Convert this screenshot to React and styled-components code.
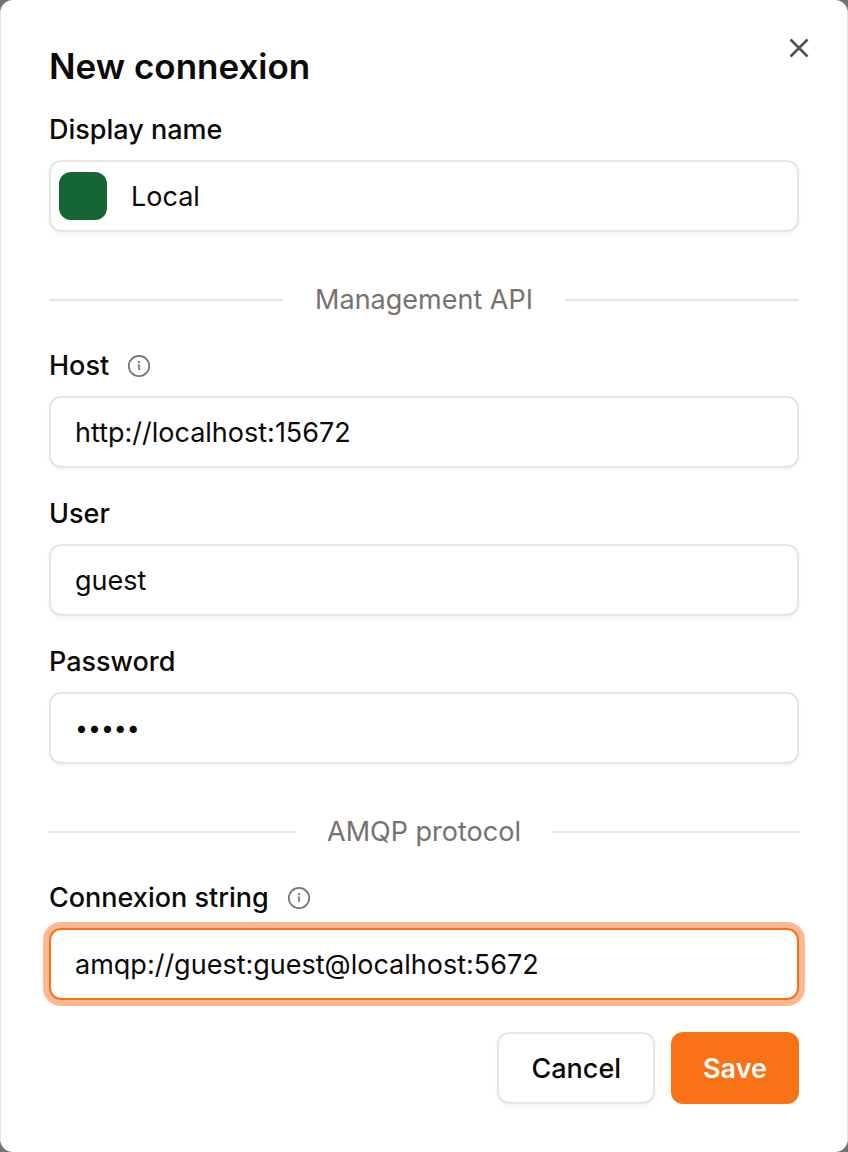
import { useState } from "react";
import styled, { createGlobalStyle } from 'styled-components';

const GlobalStyle = createGlobalStyle`
  * {
    box-sizing: border-box;
  }

  body {
    margin: 0;
    background-color: #78716c;
    color: #0c0a09;
    font-family: Inter, "Liberation Sans", sans-serif;
    font-size: 27px;
  }
`;

const Dialog = styled.form`
  position: relative;
  display: flex;
  flex-direction: column;
  gap: 32px;
  min-height: 100vh;
  padding: 48px;
  background-color: white;
  border: solid #e5e5e5;
  border-width: 0 1px;
  border-radius: 13px;
`;

const Title = styled.h1`
  margin: 0;
  font-size: 35px;
  font-weight: 600;
  line-height: 36px;
`;

const CloseButton = styled.button`
  position: absolute;
  top: 32px;
  right: 32px;
  width: 32px;
  height: 32px;
  padding: 0;
  border: none;
  background: none;
  color: #545352;
  cursor: pointer;

  svg {
    display: block;
  }
`;

const Field = styled.div`
  display: flex;
  flex-direction: column;
  gap: 16px;
`;

const LabelRow = styled.div`
  display: flex;
  align-items: center;
  gap: 18px;
  height: 28px;
  color: #78716c;
`;

const Label = styled.label`
  font-weight: 500;
  line-height: 28px;
  color: #0c0a09;
`;

const Input = styled.input`
  width: 100%;
  height: 72px;
  padding: 0 24px;
  border: 2px solid ${(props) => (props.$active ? '#f97316' : '#e5e5e5')};
  border-radius: 12px;
  outline: none;
  background-color: white;
  box-shadow: ${(props) => (props.$active ? '0 0 0 6px #feb992' : '0 2px 4px rgba(0, 0, 0, 0.05)')};
  color: inherit;
  font: inherit;

  &[type="password"] {
    font-size: 23px;
  }
`;

const NameBox = styled.div`
  display: flex;
  align-items: center;
  height: 72px;
  padding-left: 8px;
  border: 2px solid #e5e5e5;
  border-radius: 12px;
  box-shadow: 0 2px 4px rgba(0, 0, 0, 0.05);
`;

const ColorInput = styled.input`
  appearance: none;
  flex: none;
  width: 48px;
  height: 48px;
  padding: 0;
  border: none;
  border-radius: 12px;
  background: none;
  overflow: hidden;
  cursor: pointer;

  &::-webkit-color-swatch-wrapper {
    padding: 0;
  }

  &::-webkit-color-swatch {
    border: none;
  }
`;

const NameInput = styled.input`
  flex: 1;
  min-width: 0;
  padding: 0 24px;
  border: none;
  outline: none;
  background: none;
  color: inherit;
  font: inherit;
`;

const Separator = styled.div`
  display: flex;
  align-items: center;
  gap: 32px;
  margin-top: 16px;
  line-height: 40px;
  color: #78716c;

  &::before,
  &::after {
    content: "";
    flex: 1;
    height: 2px;
    background-color: #e5e5e5;
  }
`;

const Actions = styled.div`
  display: flex;
  justify-content: flex-end;
  gap: 16px;
`;

const Button = styled.button`
  height: 72px;
  padding: 0 32px;
  border: ${(props) => (props.$primary ? 'none' : '2px solid #e5e5e5')};
  border-radius: 12px;
  background-color: ${(props) => (props.$primary ? '#f97316' : 'white')};
  box-shadow: ${(props) => (props.$primary ? 'none' : '0 2px 4px rgba(0, 0, 0, 0.05)')};
  color: ${(props) => (props.$primary ? '#fafaf9' : '#0c0a09')};
  font: inherit;
  font-weight: ${(props) => (props.$primary ? 600 : 500)};
  cursor: pointer;
`;

function CloseIcon() {
  return (
    <svg width="32" height="32" viewBox="0 0 32 32" fill="none" stroke="currentColor" strokeWidth="2.7" aria-hidden="true">
      <path d="M7.5 7.5 24.5 24.5M24.5 7.5 7.5 24.5" />
    </svg>
  );
}

function InfoIcon() {
  return (
    <svg width="24" height="24" viewBox="0 0 24 24" fill="none" stroke="currentColor" aria-hidden="true">
      <circle cx="12" cy="12" r="10.2" strokeWidth="1.7" />
      <path d="M10.8 11.3H12.1V16" strokeWidth="1.6" />
      <circle cx="12" cy="8.2" r="1.1" fill="currentColor" stroke="none" />
    </svg>
  );
}

function TextField({ id, label, info, ...props }) {
  return (
    <Field>
      <LabelRow>
        <Label htmlFor={id}>{label}</Label>
        {info && <InfoIcon />}
      </LabelRow>
      <Input id={id} name={id} {...props} />
    </Field>
  );
}

function App() {
  const [values, setValues] = useState({
    name: 'Local',
    color: '#166534',
    host: 'http://localhost:15672',
    user: 'guest',
    password: 'guest',
    amqp: 'amqp://guest:guest@localhost:5672',
  });

  function handleChange(e) {
    setValues({ ...values, [e.target.name]: e.target.value });
  }

  return (
    <>
      <GlobalStyle />
      <Dialog role="dialog" aria-labelledby="title" onSubmit={(e) => e.preventDefault()}>
        <Title id="title">New connexion</Title>
        <Field>
          <LabelRow>
            <Label htmlFor="name">Display name</Label>
          </LabelRow>
          <NameBox>
            <ColorInput type="color" name="color" aria-label="Color" value={values.color} onChange={handleChange} />
            <NameInput id="name" name="name" value={values.name} onChange={handleChange} />
          </NameBox>
        </Field>
        <Separator>Management API</Separator>
        <TextField id="host" label="Host" info value={values.host} onChange={handleChange} />
        <TextField id="user" label="User" value={values.user} onChange={handleChange} />
        <TextField id="password" label="Password" type="password" value={values.password} onChange={handleChange} />
        <Separator>AMQP protocol</Separator>
        <TextField id="amqp" label="Connexion string" info $active value={values.amqp} onChange={handleChange} />
        <Actions>
          <Button type="button">Cancel</Button>
          <Button type="submit" $primary>Save</Button>
        </Actions>
        <CloseButton type="button" aria-label="Close">
          <CloseIcon />
        </CloseButton>
      </Dialog>
    </>
  );
}

export default App;
